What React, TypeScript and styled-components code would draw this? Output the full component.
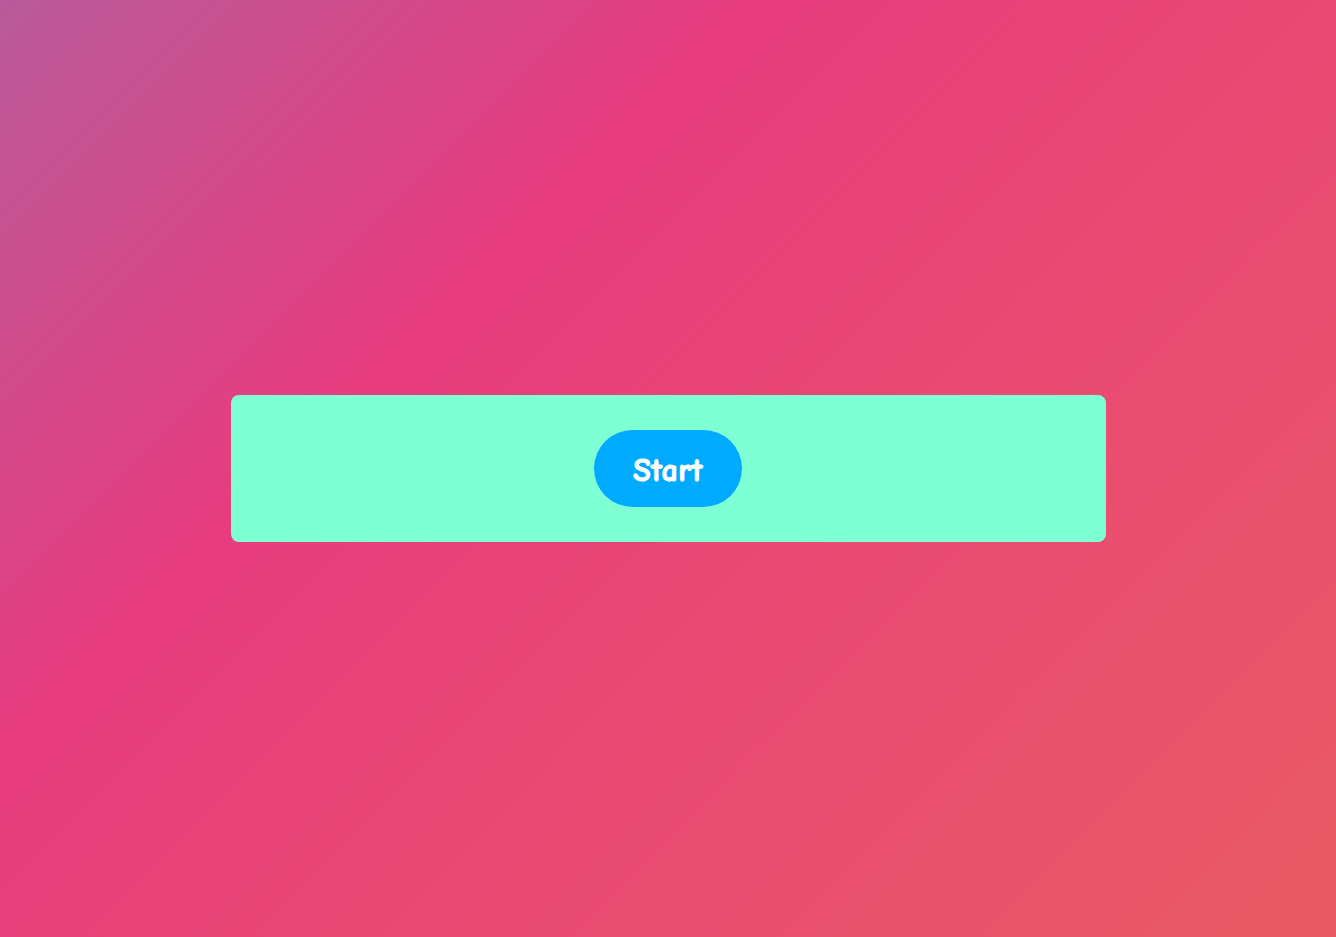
import React from "react";
import styled, { createGlobalStyle } from "styled-components";

const GlobalStyle = createGlobalStyle`
  html, body, #root {
    margin: 0;
    padding: 0;
    height: 100%;
  }
  body {
    font-family: "Comic Sans MS", "Comic Neue", "Noto Sans", sans-serif;
  }
`;

const Page = styled.main`
  width: 100%;
  height: 100vh;
  display: flex;
  align-items: center;
  justify-content: center;
  background: linear-gradient(135deg, #b95a9a 0%, #e73c7e 33%, #e94a72 61%, #ea5a64 100%);
`;

const Card = styled.section`
  width: 875px;
  height: 147px;
  box-sizing: border-box;
  background: #7fffd4;
  border-radius: 8px;
  display: flex;
  align-items: center;
  justify-content: center;
`;

const StartButton = styled.button`
  width: 148px;
  height: 77px;
  border: none;
  border-radius: 39px;
  background: #00aaff;
  color: #ffffff;
  font-family: "Comic Sans MS", "Comic Neue", "Noto Sans", sans-serif;
  font-weight: 700;
  font-size: 32px;
  -webkit-text-stroke: 1.1px #ffffff;
  letter-spacing: 0.5px;
  cursor: pointer;
  display: flex;
  align-items: center;
  justify-content: center;
  padding: 3px 0 0 0;
`;

export default function App() {
  return (
    <>
      <GlobalStyle />
      <Page>
        <Card>
          <StartButton>Start</StartButton>
        </Card>
      </Page>
    </>
  );
}
